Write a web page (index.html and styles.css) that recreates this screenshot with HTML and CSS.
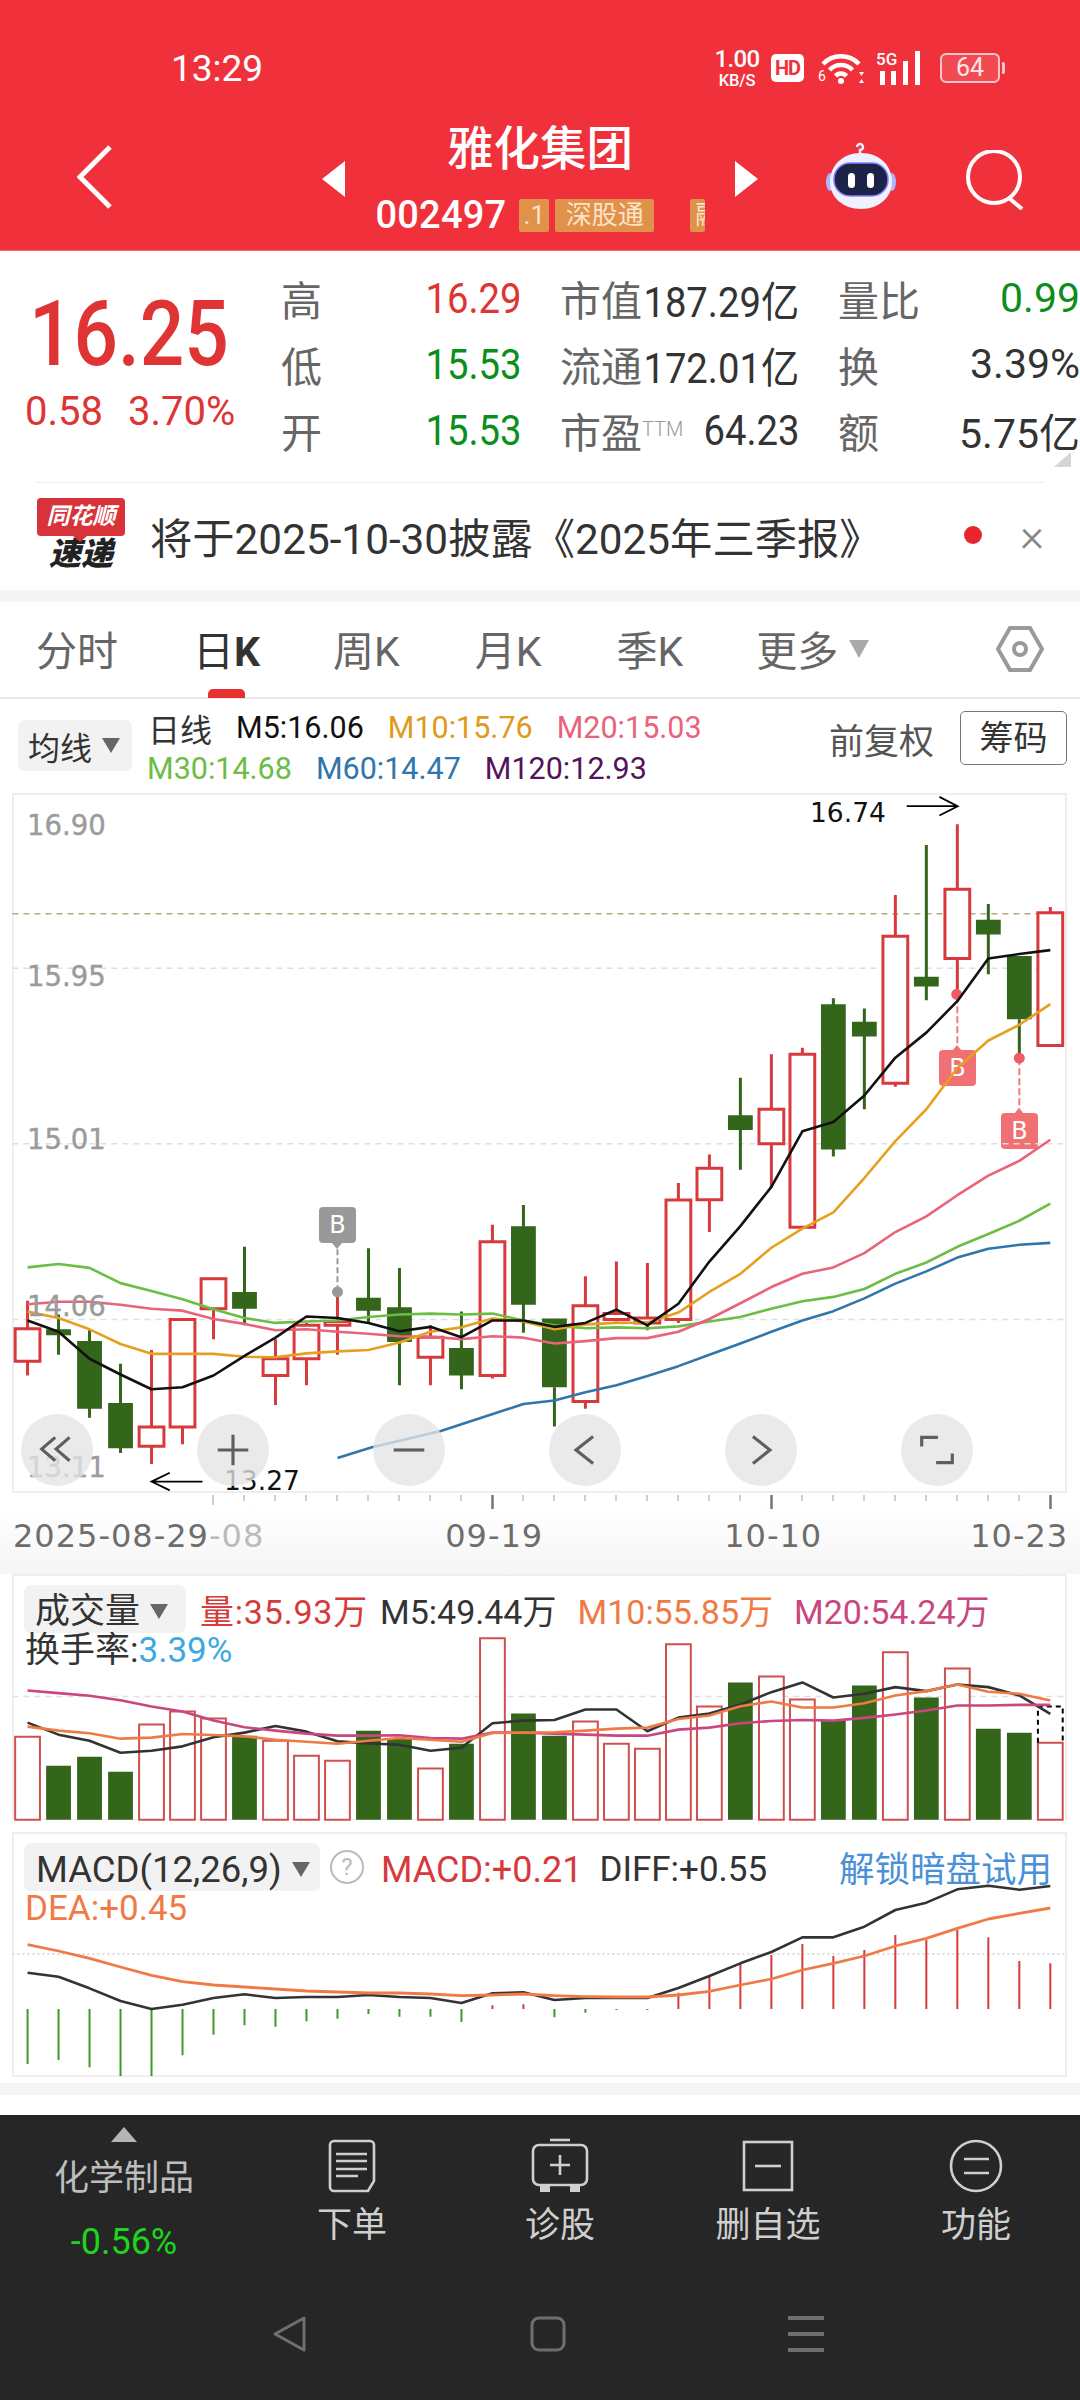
FILE: index.html
```html
<!DOCTYPE html>
<html lang="zh-CN">
<head>
<meta charset="utf-8">
<title>雅化集团</title>
<link rel="stylesheet" href="styles.css">
</head>
<body>
<div class="page">
  <header class="appbar">
    <div class="status">
      <span class="clock">13:29</span>
      <div class="status-icons">
        <div class="speed"><span class="speed-num">1.00</span><span class="speed-unit">KB/S</span></div>
        <span class="hd">HD</span>
        <svg class="ic-wifi" viewBox="0 0 46 32"><path d="M5 12a25 25 0 0 1 36 0M11.500 18a16 16 0 0 1 23 0M17.500 24a7.500 7.500 0 0 1 11 0"/><circle cx="23" cy="29" r="3"/><polygon class="wifi-solid" points="41,20 46,20 43.500,24"/><polygon class="wifi-solid" points="41,31 46,31 43.500,27"/><text x="0" y="29" class="wifi-six">6</text></svg>
        <svg class="ic-signal" viewBox="0 0 48 36"><text x="0" y="15" class="sig-text">5G</text><rect x="4" y="21" width="5" height="14"/><rect x="15" y="21" width="5" height="14"/><rect x="27" y="11" width="5" height="24"/><rect x="39" y="1" width="5" height="34"/></svg>
        <div class="battery"><span class="battery-body">64</span><span class="battery-tip"></span></div>
      </div>
    </div>
    <div class="topnav">
      <div class="nav-back">
        <svg class="ic-back" viewBox="0 0 36 64"><path d="M33 2 3 32l30 30"/></svg>
      </div>
      <div class="nav-stock">
        <span class="tri tri-left"></span>
        <div class="stock-stack">
          <div class="stock-name">雅化集团</div>
          <div class="stock-code"><span class="code">002497</span><span class="tag tag-one">.1</span><span class="tag tag-sgt">深股通</span><span class="tag tag-cut">融</span></div>
        </div>
        <span class="tri tri-right"></span>
      </div>
      <div class="nav-tools">
        <svg class="ic-robot" viewBox="0 0 70 68">
          <path class="rb-ant" d="M34 13V8a3 3 0 1 0-3-3"/>
          <ellipse class="rb-ear" cx="4" cy="40" rx="4" ry="9"/>
          <ellipse class="rb-ear" cx="66" cy="40" rx="4" ry="9"/>
          <path class="rb-head" d="M35 11c19 0 31 13 31 29 0 15-13 27-31 27S4 55 4 40C4 24 16 11 35 11z"/>
          <rect class="rb-face" x="8" y="21" width="54" height="33" rx="16"/>
          <rect class="rb-eye" x="22" y="31" width="7" height="15" rx="3.500"/>
          <rect class="rb-eye" x="41" y="31" width="7" height="15" rx="3.500"/>
        </svg>
        <svg class="ic-search" viewBox="0 0 58 60"><circle cx="28" cy="27" r="26"/><path d="M43 48l13 11"/></svg>
      </div>
    </div>
  </header>

  <section class="quote">
    <div class="price-col">
      <div class="price">16.25</div>
      <div class="change"><span>0.58</span><span>3.70%</span></div>
    </div>
    <div class="stats">
      <div class="stat"><span class="lbl">高</span><span class="val up">16.29</span></div>
      <div class="stat"><span class="lbl">市值</span><span class="val">187.29亿</span></div>
      <div class="stat"><span class="lbl">量比</span><span class="val val-wide down">0.99</span></div>
      <div class="stat"><span class="lbl">低</span><span class="val down">15.53</span></div>
      <div class="stat"><span class="lbl">流通</span><span class="val">172.01亿</span></div>
      <div class="stat"><span class="lbl">换</span><span class="val val-wide">3.39%</span></div>
      <div class="stat"><span class="lbl">开</span><span class="val down">15.53</span></div>
      <div class="stat"><span class="lbl">市盈<sup class="ttm">TTM</sup></span><span class="val">64.23</span></div>
      <div class="stat"><span class="lbl">额</span><span class="val val-wide">5.75亿</span></div>
    </div>
    <span class="corner"></span>
  </section>

  <section class="notice">
    <div class="notice-logo"><span class="logo-top">同花顺</span><span class="logo-bottom">速递</span></div>
    <div class="notice-text">将于2025-10-30披露《2025年三季报》</div>
    <span class="notice-dot"></span>
    <span class="notice-close">×</span>
  </section>
  <div class="band"></div>

  <nav class="tabs">
    <span class="tab">分时</span>
    <span class="tab tab-active">日<b>K</b></span>
    <span class="tab">周K</span>
    <span class="tab">月K</span>
    <span class="tab">季K</span>
    <span class="tab tab-more">更多<i class="caret caret-light"></i></span>
    <svg class="ic-hex" viewBox="0 0 48 48"><path d="M14 3h20l12 21-12 21H14L2 24z"/><circle cx="24" cy="24" r="6"/></svg>
  </nav>

  <div class="legend">
    <div class="chip chip-ma">均线<i class="caret"></i></div>
    <div class="legend-lines">
      <div class="legend-row"><span class="legend-k">日线</span><span class="c-m5">M5:16.06</span><span class="c-m10">M10:15.76</span><span class="c-m20">M20:15.03</span></div>
      <div class="legend-row"><span class="c-m30">M30:14.68</span><span class="c-m60">M60:14.47</span><span class="c-m120">M120:12.93</span></div>
    </div>
    <span class="fq">前复权</span>
    <span class="chouma">筹码</span>
  </div>

  <section class="panel panel-main">
    <span class="badge badge-gray b1">B</span>
    <span class="badge badge-red b2">B</span>
    <span class="badge badge-red b3">B</span>
    <svg class="chart" viewBox="40.66 10.2 3052 1417" preserveAspectRatio="none">
      <path class="grid" d="M36 363H3100M36 720H3100M36 1078H3100"/>
      <path class="grid-last" d="M36 252H3100"/>
      <path class="wick-r" d="M80 1040V1097M80 1163V1192M440 1140V1297M440 1336V1372M530 1297V1332M620 1056V1118M800 1118V1158M800 1192V1252M890 1085V1090M890 1158V1212M980 1022V1082M980 1090V1150M1250 1090V1114M1250 1155V1212M1430 885V920M1430 1192V1198M1700 990V1050M1700 1245V1260M1790 960V1066M1790 1078V1082M1880 963V1075M1880 1085V1100M1970 800V835M1970 1078V1085M2060 742V770M2060 834V900M2240 538V650M2240 720V810M2330 525V538M2330 890V893M2600 214V298M2600 597V604M2780 70V202M2780 343V420M3050 238V250"/>
      <path class="body-r" d="M44 1097h72v66h-72zM404 1297h72v39h-72zM494 1078h72v219h-72zM584 995h72v61h-72zM764 1158h72v34h-72zM854 1090h72v68h-72zM944 1082h72v8h-72zM1214 1114h72v41h-72zM1394 920h72v272h-72zM1664 1050h72v195h-72zM1754 1066h72v12h-72zM1844 1075h72v10h-72zM1934 835h72v243h-72zM2024 770h72v64h-72zM2204 650h72v70h-72zM2294 538h72v352h-72zM2564 298h72v299h-72zM2744 202h72v141h-72zM3014 250h72v270h-72z"/>
      <path class="wick-g" d="M170 1068V1150M260 1100V1278M350 1168V1350M710 930V1090M1070 933V1085M1160 973V1212M1340 1062V1220M1520 845V1105M1610 1216V1296M2150 586V773M2420 424V746M2510 445V650M2690 112V428M2870 232V375M2960 467V545"/>
      <path class="body-g" d="M134 1098h72v12h-72zM224 1122h72v138h-72zM314 1248h72v92h-72zM674 1022h72v34h-72zM1034 1034h72v26h-72zM1124 1053h72v71h-72zM1304 1136h72v56h-72zM1484 888h72v160h-72zM1574 1076h72v140h-72zM2114 662h72v30h-72zM2384 436h72v296h-72zM2474 472h72v30h-72zM2654 380h72v20h-72zM2834 264h72v30h-72zM2924 338h72v129h-72z"/>
      <path class="mark-gray-line" d="M980 935V1020"/>
      <path class="mark-gray-dot" d="M980 1022h.01"/>
      <path class="mark-red-line" d="M2780 420V522M2960 546V650"/>
      <path class="mark-red-dot" d="M2778 416h.01M2960 546h.01"/>
      <polyline class="ln l-m30" points="80,972 170,965 260,973 350,1004 440,1020 530,1037 620,1057 710,1075 800,1085 890,1082 980,1080 1070,1073 1160,1068 1250,1066 1340,1068 1430,1066 1520,1080 1610,1090 1700,1096 1790,1094 1880,1096 1970,1092 2060,1082 2150,1073 2240,1056 2330,1041 2420,1032 2510,1016 2600,985 2690,962 2780,930 2870,904 2960,877 3050,842"/>
      <polyline class="ln l-m60" points="980,1360 1080,1338 1280,1305 1520,1250 1610,1243 1700,1226 1790,1212 1880,1193 1970,1173 2060,1150 2150,1127 2240,1103 2330,1080 2420,1061 2510,1035 2600,1005 2690,980 2780,952 2870,934 2960,926 3050,922"/>
      <polyline class="ln l-m20" points="80,1047 170,1042 260,1042 350,1048 440,1056 530,1060 620,1077 710,1087 800,1100 890,1098 980,1103 1070,1107 1160,1112 1250,1113 1340,1118 1430,1112 1520,1115 1610,1127 1700,1122 1790,1116 1880,1116 1970,1103 2060,1077 2150,1045 2240,1012 2330,985 2420,972 2510,943 2600,900 2690,868 2780,825 2870,785 2960,755 3050,712"/>
      <polyline class="ln l-m10" points="80,1062 170,1075 260,1098 350,1128 440,1148 530,1148 620,1148 710,1154 800,1155 890,1147 980,1143 1070,1140 1160,1125 1250,1103 1340,1094 1430,1076 1520,1082 1610,1098 1700,1088 1790,1085 1880,1084 1970,1064 2060,1022 2150,985 2240,932 2330,893 2420,860 2510,790 2600,715 2690,650 2780,566 2870,510 2960,478 3050,436"/>
      <polyline class="ln l-m5" points="80,1080 170,1103 260,1158 350,1190 440,1220 530,1216 620,1192 710,1152 800,1115 890,1072 980,1075 1070,1085 1160,1102 1250,1093 1340,1114 1430,1080 1520,1080 1610,1093 1700,1085 1790,1058 1880,1090 1970,1046 2060,960 2150,888 2240,808 2330,695 2420,676 2510,622 2600,545 2690,494 2780,430 2870,343 2960,334 3050,326"/>
      <path class="arrow" d="M2633 33H2781M2728 14l53 19-53 19M588 1408H440M493 1390l-53 18 53 18"/>
    </svg>
    <span class="ylab y1">16.90</span>
    <span class="ylab y2">15.95</span>
    <span class="ylab y3">15.01</span>
    <span class="ylab y4">14.06</span>
    <span class="ylab y5">13.11</span>
    <span class="extreme ex-hi">16.74</span>
    <span class="extreme ex-lo">13.27</span>
    <div class="chart-btns">
      <span class="cbtn"><svg viewBox="0 0 40 40"><path d="M18 6 3 19l15 13M34 6 19 19l15 13"/></svg></span>
      <span class="cbtn"><svg viewBox="0 0 40 40"><path d="M3 20h34M20 3v34"/></svg></span>
      <span class="cbtn"><svg viewBox="0 0 40 40"><path d="M3 20h34"/></svg></span>
      <span class="cbtn"><svg viewBox="0 0 40 40"><path d="M29 5 10 20l19 15"/></svg></span>
      <span class="cbtn"><svg viewBox="0 0 40 40"><path d="M11 5l19 15-19 15"/></svg></span>
      <span class="cbtn"><svg viewBox="0 0 40 40"><path d="M21 6H3v10M19 34h18V24"/></svg></span>
    </div>
  </section>

  <div class="axis">
    <svg class="ticks" viewBox="0 0 1080 18">
      <path class="tick" d="M213 2v10M244 2v6M275 2v6M306 2v6M337 2v6M368 2v6M399 2v6M430 2v6M461 2v6M523 2v6M554 2v6M585 2v6M616 2v6M647 2v6M678 2v6M709 2v6M740 2v6M802 2v6M833 2v6M864 2v6M895 2v6M926 2v6M957 2v6M988 2v6M1019 2v6"/>
      <path class="tick-major" d="M492.500 2v14M771.500 2v14M1050.500 2v14"/>
    </svg>
    <div class="dates">
      <span class="date">2025-08-29<span class="date-fade">-08</span></span>
      <span class="date d2">09-19</span>
      <span class="date d3">10-10</span>
      <span class="date d4">10-23</span>
    </div>
  </div>

  <section class="panel panel-vol">
    <svg class="chart" viewBox="40.66 48 3052 726" preserveAspectRatio="none">
      <path class="grid" d="M36 408H3100"/>
      <path class="vol-g" d="M134 615h72V776h-72zM224 588h72V776h-72zM314 633h72V776h-72zM674 525h72V776h-72zM1034 510h72V776h-72zM1124 534h72V776h-72zM1304 549h72V776h-72zM1484 459h72V776h-72zM1574 525h72V776h-72zM2114 366h72V776h-72zM2384 480h72V776h-72zM2474 375h72V776h-72zM2654 411h72V776h-72zM2834 504h72V776h-72zM2924 516h72V776h-72z"/>
      <path class="vol-r" d="M44 528h72V776h-72zM404 492h72V776h-72zM494 453h72V776h-72zM584 474h72V776h-72zM764 540h72V776h-72zM854 585h72V776h-72zM944 600h72V776h-72zM1214 623h72V776h-72zM1394 234h72V776h-72zM1664 483h72V776h-72zM1754 549h72V776h-72zM1844 564h72V776h-72zM1934 252h72V776h-72zM2024 438h72V776h-72zM2204 348h72V776h-72zM2294 417h72V776h-72zM2564 276h72V776h-72zM2744 324h72V776h-72zM3014 546h72V776h-72z"/>
      <path class="vol-live" d="M3014 546V438h72V546"/>
      <polyline class="ln l-v5" points="80,486 170,522 260,540 350,576 440,570 530,557 620,530 710,516 800,496 890,513 980,542 1070,548 1160,552 1250,570 1340,561 1430,488 1520,480 1610,478 1700,447 1790,447 1880,512 1970,471 2060,459 2150,432 2240,395 2330,366 2420,411 2510,400 2600,380 2690,392 2780,372 2870,380 2960,405 3050,460"/>
      <polyline class="ln l-v20" points="80,390 170,398 260,406 350,419 440,438 530,453 620,480 710,500 800,510 890,519 980,525 1070,525 1160,524 1250,532 1340,534 1430,516 1520,516 1610,519 1700,522 1790,525 1880,525 1970,507 2060,501 2150,488 2240,481 2330,478 2420,480 2510,472 2600,462 2690,450 2780,435 2870,435 2960,433 3050,433"/>
      <polyline class="ln l-v10" points="80,498 170,510 260,518 350,534 440,531 530,520 620,523 710,527 800,537 890,543 980,549 1070,540 1160,532 1250,537 1340,543 1430,517 1520,516 1610,515 1700,510 1790,504 1880,501 1970,475 2060,465 2150,437 2240,423 2330,441 2420,441 2510,428 2600,405 2690,392 2780,372 2870,394 2960,400 3050,420"/>
    </svg>
    <div class="panel-head">
      <div class="head-row">
        <div class="chip chip-vol">成交量<i class="caret"></i></div>
        <span class="h-red h-gapless">量:35.93万</span>
        <span class="h-dark">M5:49.44万</span>
        <span class="h-orange">M10:55.85万</span>
        <span class="h-pink">M20:54.24万</span>
      </div>
      <div class="head-sub">换手率:<span class="h-blue">3.39%</span></div>
    </div>
  </section>

  <section class="panel panel-macd">
    <svg class="chart" viewBox="20.33 42 1526 723" preserveAspectRatio="none">
      <path class="grid-dot" d="M18 402H1550"/>
      <path class="macd-g" d="M40 567V732M85 567V720M130 567V742M175 567V768M220 567V768M265 567V706M310 567V644M355 567V616M400 567V620M445 567V604M490 567V596M535 567V582M580 567V590M625 567V590M670 567V606M805 567V592M850 567V578M895 567V570M940 567V570"/>
      <path class="macd-r" d="M715 567V556M760 567V553M985 567V518M1030 567V470M1075 567V432M1120 567V405M1165 567V372M1210 567V408M1255 567V390M1300 567V345M1345 567V360M1390 567V330M1435 567V352M1480 567V423M1525 567V430"/>
      <polyline class="ln l-diff" points="40,458 85,470 130,505 175,543 220,567 265,554 310,534 355,523 400,534 445,531 490,531 535,525 580,531 625,534 670,549 715,520 760,517 805,540 850,534 895,534 940,534 985,504 1030,468 1075,430 1120,396 1165,352 1210,352 1255,320 1300,270 1345,248 1390,208 1435,197 1480,209 1525,198"/>
      <polyline class="ln l-dea" points="40,374 85,393 130,415 175,441 220,466 265,485 310,495 355,501 400,507 445,513 490,516 535,519 580,519 625,522 670,527 715,525 760,522 805,527 850,530 895,531 940,531 985,525 1030,514 1075,495 1120,477 1165,450 1210,430 1255,408 1300,378 1345,355 1390,325 1435,297 1480,280 1525,264"/>
    </svg>
    <div class="panel-head">
      <div class="head-row head-row-macd">
        <div class="chip chip-macd">MACD(12,26,9)<i class="caret"></i></div>
        <span class="help">?</span>
        <span class="h-red macd-val">MACD:+0.21</span>
        <span class="h-dark diff-val">DIFF:+0.55</span>
        <span class="h-link">解锁暗盘试用</span>
      </div>
      <div class="head-sub h-orange">DEA:+0.45</div>
    </div>
  </section>

  <div class="white-gap"></div>
  <div class="band"></div>
  <div class="white-foot"></div>

  <footer class="bottombar">
    <div class="actions">
      <div class="action action-sector">
        <span class="sector-tri"></span>
        <span class="sector-name">化学制品</span>
        <span class="sector-pct">-0.56%</span>
      </div>
      <div class="action">
        <svg class="act-ic" viewBox="0 0 60 56"><path d="M12 3h36a4 4 0 0 1 4 4v36l-6 10H12a4 4 0 0 1-4-4V7a4 4 0 0 1 4-4z"/><path d="M14 16h31M14 23h31M14 31h31M14 38h22"/></svg>
        <span class="act-label">下单</span>
      </div>
      <div class="action">
        <svg class="act-ic" viewBox="0 0 60 56"><path d="M20 2h20"/><path d="M9 7h42a6 6 0 0 1 6 6v28a6 6 0 0 1-6 6H9a6 6 0 0 1-6-6V13a6 6 0 0 1 6-6z"/><path d="M20 27h20M30 17v20"/><path class="act-fill" d="M10 48h10v6H10zM40 48h10v6H40z"/></svg>
        <span class="act-label">诊股</span>
      </div>
      <div class="action">
        <svg class="act-ic" viewBox="0 0 60 56"><rect x="6" y="4" width="48" height="48"/><path d="M17 28h26"/></svg>
        <span class="act-label">删自选</span>
      </div>
      <div class="action">
        <svg class="act-ic" viewBox="0 0 60 56"><circle cx="30" cy="28" r="25"/><path d="M18 21h25M18 35h25"/></svg>
        <span class="act-label">功能</span>
      </div>
    </div>
    <div class="sysnav">
      <svg class="sys-ic" viewBox="0 0 36 36"><path d="M32 2 3 18l29 16z"/></svg>
      <svg class="sys-ic" viewBox="0 0 36 36"><rect x="2" y="2" width="32" height="32" rx="7"/></svg>
      <svg class="sys-ic sys-menu" viewBox="0 0 36 36"><path d="M0 2h36M0 18h36M0 34h36"/></svg>
    </div>
  </footer>
</div>
</body>
</html>
```

FILE: styles.css
```css
* { box-sizing: border-box; }
html, body { margin: 0; padding: 0; background: #fff; }
body { font-family: Roboto, "Noto Sans CJK SC", sans-serif; color: #333; }
.page { width: 1080px; height: 2400px; overflow: hidden; display: flex; flex-direction: column; }

/* app bar */
.appbar { height: 251px; background: #f0313b; color: #fff; flex: none; border-bottom: 1px solid #e96a70; }
.status { height: 110px; padding: 26px 75px 0 171px; display: flex; align-items: center; }
.clock { font-size: 37px; }
.status-icons { margin-left: auto; display: flex; align-items: center; }
.speed { display: flex; flex-direction: column; align-items: center; width: 50px; font-weight: 500; }
.speed-num { font-size: 24px; line-height: 24px; letter-spacing: -.6px; }
.speed-unit { font-size: 16.500px; line-height: 19px; letter-spacing: -.2px; }
.hd { width: 33px; height: 28px; margin-left: 9px; border-radius: 5px; background: #fff; color: #f0313b; font-size: 20px; line-height: 28px; font-weight: 700; text-align: center; letter-spacing: -1px; }
.ic-wifi { width: 46px; height: 32px; margin-left: 14px; overflow: visible; }
.ic-wifi path { fill: none; stroke: #fff; stroke-width: 4.500; }
.ic-wifi circle, .wifi-solid { fill: #fff; }
.wifi-six { font-size: 14px; fill: #fff; }
.ic-signal { width: 48px; height: 36px; margin-left: 12px; fill: #fff; }
.sig-text { font-size: 17px; font-weight: 500; fill: #fff; }
.battery { display: flex; align-items: center; margin-left: 16px; }
.battery-body { width: 60px; height: 30px; border: 2px solid #fbc5c8; border-radius: 6px; background: rgba(255,255,255,.12); text-align: center; font-size: 25px; line-height: 26px; color: #fde6e7; }
.battery-tip { width: 3px; height: 12px; margin-left: 2px; background: #fbc5c8; border-radius: 0 2px 2px 0; }

.topnav { height: 140px; display: grid; grid-template-columns: 322px 436px 1fr; align-items: start; }
.nav-back { padding: 35px 0 0 77px; }
.ic-back { display: block; width: 36px; height: 64px; fill: none; stroke: #fff; stroke-width: 5; }
.nav-stock { display: flex; justify-content: space-between; align-items: flex-start; }
.tri { width: 0; height: 0; margin-top: 51px; border-top: 18px solid transparent; border-bottom: 18px solid transparent; }
.tri-left { border-right: 23px solid #fff; }
.tri-right { border-left: 23px solid #fff; }
.stock-stack { width: 329px; display: flex; flex-direction: column; align-items: center; }
.stock-name { margin-top: 11px; font-size: 46.500px; line-height: 56px; font-weight: 500; }
.stock-code { margin-top: 16px; width: 329px; height: 44px; overflow: hidden; display: flex; align-items: center; }
.code { font-size: 38px; letter-spacing: .2px; font-weight: 500; }
.tag { flex: none; height: 33px; background: #e0914a; border-radius: 2px; color: #fde3c8; font-size: 26px; line-height: 33px; text-align: center; white-space: nowrap; }
.tag-one { width: 30px; margin-left: 13px; }
.tag-sgt { width: 99px; margin-left: 6px; }
.tag-cut { width: 15px; margin-left: 36px; overflow: hidden; text-align: left; text-indent: 5px; }
.nav-tools { padding: 32px 0 0 68px; display: flex; align-items: flex-start; }
.ic-robot { width: 70px; height: 68px; flex: none; }
.rb-ant { fill: none; stroke: #eef; stroke-width: 2.500; }
.rb-ear { fill: #a9b8ff; }
.rb-head { fill: #eef2ff; }
.rb-face { fill: #1b2347; stroke: #8a7dff; stroke-width: 1.500; }
.rb-eye { fill: #fff; }
.ic-search { width: 58px; height: 60px; margin: 8px 0 0 70px; fill: none; stroke: #fff; stroke-width: 4; }

/* quote */
.quote { height: 231px; flex: none; display: flex; position: relative; }
.price-col { width: 281px; flex: none; padding: 39px 0 0 25px; }
.price { font-size: 90px; line-height: 90px; color: #df3434; font-weight: 500; transform: scaleX(.87); transform-origin: left; margin-left: 4px; }
.change { margin-top: 10px; display: flex; gap: 25px; font-size: 40px; line-height: 44px; color: #df3434; }
.stats { flex: 1; padding-top: 14px; display: grid; grid-template-columns: 240px 239px 242px; column-gap: 39px; grid-auto-rows: 66px; }
.stat { display: flex; justify-content: space-between; align-items: center; white-space: nowrap; }
.lbl { font-size: 41px; color: #666; }
.ttm { font-size: 20px; color: #999; vertical-align: 12px; line-height: 0; font-weight: 300; }
.val { font-size: 42px; color: #333; margin-left: -30px; transform: scaleX(.91); transform-origin: right center; }
.val-wide { font-size: 41px; transform: none; }
.val.up { color: #df3434; }
.val.down { color: #0a8f1a; }
.corner { position: absolute; right: 9px; bottom: 15px; width: 0; height: 0; border-left: 17px solid transparent; border-bottom: 15px solid #d6d6d6; }

/* notice */
.notice { height: 108px; flex: none; margin: 0 36px; padding-bottom: 3px; border-top: 1px solid #eeeeee; display: flex; align-items: center; }
.notice-logo { width: 90px; flex: none; display: flex; flex-direction: column; align-items: center; }
.logo-top { width: 88px; height: 38px; background: #d8323a; border-radius: 4px; color: #fff; font-size: 23px; line-height: 38px; text-align: center; font-weight: 700; font-style: italic; white-space: nowrap; position: relative; }
.logo-top::after { content: ""; position: absolute; left: 36px; top: 38px; width: 0; height: 0; border-left: 7px solid transparent; border-right: 7px solid transparent; border-top: 6px solid #d8323a; }
.logo-bottom { font-size: 32px; line-height: 36px; font-weight: 900; font-style: italic; color: #222; }
.notice-text { margin-left: 24px; font-size: 42.300px; color: #333; white-space: nowrap; }
.notice-dot { margin-left: auto; width: 18px; height: 18px; border-radius: 50%; background: #e8242c; }
.notice-close { margin-left: 38px; width: 24px; font-size: 46px; line-height: 46px; color: #888; text-align: right; font-weight: 300; }
.band { height: 12px; flex: none; background: #f5f5f5; }

/* tabs */
.tabs { height: 97px; flex: none; padding: 5px 38px 0 36px; display: flex; align-items: center; gap: 75px; border-bottom: 2px solid #e8e8e8; font-size: 41px; color: #666; position: relative; }
.tab { white-space: nowrap; line-height: 50px; }
.tab-active { color: #333; margin: 0 -2px 0 0; position: relative; }
.tab-active b { font-weight: 700; }
.tab-active::after { content: ""; position: absolute; left: 15px; right: 15px; top: 62px; height: 9px; background: #e7302f; border-radius: 5px 5px 0 0; }
.tab-more { display: flex; align-items: center; margin-left: -2px; }
.caret { display: inline-block; width: 0; height: 0; margin-left: 9px; border-left: 9px solid transparent; border-right: 9px solid transparent; border-top: 15px solid #666; }
.caret-light { border-top-color: #aaa; border-left-width: 10px; border-right-width: 10px; border-top-width: 18px; margin-left: 11px; margin-top: -6px; }
.ic-hex { width: 48px; height: 48px; margin-left: auto; fill: none; stroke: #9a9a9a; stroke-width: 4; position: relative; left: 2px; top: -3px; }

/* legend */
.legend { height: 94px; flex: none; display: flex; align-items: flex-start; padding: 8px 13px 0 18px; font-size: 30.500px; position: relative; }
.chip { background: #f2f2f2; border-radius: 7px; display: flex; align-items: center; color: #333; white-space: nowrap; }
.chip-ma { width: 114px; height: 51px; margin-top: 13px; padding-left: 10px; font-size: 32px; flex: none; }
.legend-lines { margin-left: 15px; flex: none; }
.legend-row { display: flex; gap: 24px; height: 41px; align-items: center; white-space: nowrap; }
.legend-k { font-size: 32px; color: #333; margin: 0 0 0 1px; }
.c-m5 { color: #111; }
.c-m10 { color: #e09a1a; }
.c-m20 { color: #e9637a; }
.c-m30 { color: #6cbd45; }
.c-m60 { color: #2f76ad; }
.c-m120 { color: #54145a; }
.fq { margin-left: auto; margin-top: 14px; font-size: 35px; line-height: 44px; color: #555; }
.chouma { margin: 4px 0 0 26px; width: 107px; height: 54px; border: 1px solid #777; border-radius: 5px; font-size: 34px; line-height: 52px; text-align: center; color: #333; }

/* panels */
.panel { position: relative; flex: none; margin: 0 13px 0 12px; border: 2px solid #eeeeee; background: #fff; }
.panel-main { height: 700px; }
.panel-vol { height: 246px; border-bottom-width: 1px; }
.panel-macd { height: 245px; margin-top: 12px; }
.chart { position: absolute; left: 0; top: 0; width: 100%; height: 100%; overflow: visible; fill: none; }
.chart * { vector-effect: non-scaling-stroke; }
.grid { stroke: #dfdfdf; stroke-width: 1.500; stroke-dasharray: 6 5; }
.grid-last { stroke: #b9a77f; stroke-width: 1.500; stroke-dasharray: 6 5; }
.grid-dot { stroke: #dcdcdc; stroke-width: 2; stroke-dasharray: 2 3; }
.wick-r { stroke: #d63a3c; stroke-width: 3; }
.body-r { stroke: #d63a3c; stroke-width: 3; fill: #fff; }
.wick-g { stroke: #33651a; stroke-width: 3; }
.body-g { fill: #33651a; }
.ln { fill: none; stroke-width: 2.600; stroke-linejoin: round; }
.l-m5 { stroke: #111; }
.l-m10 { stroke: #e5a021; }
.l-m20 { stroke: #e9637a; }
.l-m30 { stroke: #6cbd45; }
.l-m60 { stroke: #2f76ad; }
.arrow { stroke: #000; stroke-width: 1.800; fill: none; }
.mark-gray-line { stroke: #999; stroke-width: 2; stroke-dasharray: 6 3; }
.mark-gray-dot { stroke: #999; stroke-width: 11; stroke-linecap: round; }
.mark-red-line { stroke: #f07a80; stroke-width: 2; stroke-dasharray: 7 3; }
.mark-red-dot { stroke: #ee5d63; stroke-width: 11; stroke-linecap: round; }

.badge { position: absolute; width: 37px; height: 36px; border-radius: 4px; color: #fff; font-family: "DejaVu Sans", sans-serif; font-size: 24px; line-height: 36px; text-align: center; }
.badge::after { content: ""; position: absolute; left: 13px; width: 0; height: 0; border-left: 5px solid transparent; border-right: 5px solid transparent; }
.badge-gray { background: #999; }
.badge-gray::after { top: 36px; border-top: 6px solid #999; }
.badge-red { background: #f07074; }
.badge-red::after { top: -5px; border-bottom: 6px solid #f07074; }
.b1 { left: 305px; top: 412px; }
.b2 { left: 925px; top: 255px; }
.b3 { left: 987px; top: 318px; }

.ylab { position: absolute; left: 13px; font-family: "DejaVu Sans", sans-serif; font-size: 27.500px; line-height: 32px; color: #9b9b9b; -webkit-text-stroke: .4px #9b9b9b; }
.y1 { top: 14px; }
.y2 { top: 165px; }
.y3 { top: 328px; }
.y4 { top: 495px; }
.y5 { top: 656px; }
.extreme { position: absolute; font-family: "DejaVu Sans", sans-serif; font-size: 26.500px; line-height: 30px; color: #111; }
.ex-hi { left: 796px; top: 3px; }
.ex-lo { left: 210px; top: 671px; }
.chart-btns { position: absolute; left: 7px; top: 619px; display: flex; gap: 104px; }
.cbtn { width: 72px; height: 72px; border-radius: 50%; background: rgba(228,228,228,.78); display: flex; align-items: center; justify-content: center; }
.cbtn svg { width: 36px; height: 36px; fill: none; stroke: #5f5f5f; stroke-width: 3.500; }

/* axis */
.axis { height: 81px; flex: none; background: linear-gradient(#fff 15%, #f5f5f5 100%); position: relative; }
.ticks { display: block; width: 1080px; height: 18px; }
.tick { stroke: #cfcfcf; stroke-width: 2; fill: none; }
.tick-major { stroke: #777; stroke-width: 2.500; fill: none; }
.dates { display: flex; padding-left: 13px; margin-top: 6px; font-family: "DejaVu Sans", sans-serif; font-size: 32px; line-height: 38px; color: #6d6d6d; white-space: nowrap; letter-spacing: 1px; }
.date-fade { color: #bbb; }
.d2 { margin-left: 181px; }
.d3 { margin-left: 181px; }
.d4 { margin-left: 148px; }

/* panel heads */
.panel-head { position: absolute; left: 10px; right: 13px; top: 9px; font-size: 34px; line-height: 40px; }
.head-row { display: flex; align-items: center; white-space: nowrap; gap: 21px; height: 48px; }
.head-row > span { padding-top: 5px; }
.chip-vol { width: 162px; height: 48px; padding: 5px 0 0 11px; font-size: 35px; margin-right: -7px; }
.h-gapless { letter-spacing: .8px; margin-right: -9px; }
.chip-macd { width: 296px; height: 48px; padding: 5px 0 0 12px; font-size: 36.500px; flex: none; }
.chip .caret { margin-left: 10px; }
.head-sub { margin-left: 1px; font-size: 35px; line-height: 36px; color: #333; }
.h-red { color: #d63a3c; }
.h-dark { color: #333; }
.head-sub.h-orange, .h-orange { color: #ef7a45; }
.h-pink { color: #c9467f; }
.h-blue { color: #3ea8e0; }
.h-link { color: #4a90d9; font-size: 35.500px; margin-left: auto; }
.head-row-macd { gap: 0; }
.head-row > .help { width: 34px; height: 34px; padding: 0; margin-left: 10px; border: 2px solid #bbb; border-radius: 50%; color: #bbb; font-size: 24px; line-height: 30px; text-align: center; flex: none; }
.macd-val { font-size: 36px; margin-left: 17px; }
.diff-val { font-size: 35px; margin-left: 17px; }
.vol-g { fill: #33651a; }
.vol-r { stroke: #cf5050; stroke-width: 2; fill: #fff; }
.vol-live { stroke: #000; stroke-width: 2; stroke-dasharray: 5 4; fill: none; }
.l-v5 { stroke: #333; }
.l-v10 { stroke: #ef7a45; }
.l-v20 { stroke: #c9467f; }
.macd-g { stroke: #3d9a2a; stroke-width: 2; }
.macd-r { stroke: #d63a3c; stroke-width: 2; }
.l-diff { stroke: #333; }
.l-dea { stroke: #ef7a45; stroke-width: 2.800; }

.white-gap { height: 6px; flex: none; }
.white-foot { height: 20px; flex: none; }

/* bottom bar */
.bottombar { flex: 1; background: #262626; color: #cfcfcf; }
.actions { height: 175px; display: grid; grid-template-columns: 248px repeat(4, 208px); }
.action { display: flex; flex-direction: column; align-items: center; padding-top: 23px; }
.action-sector { padding-top: 12px; }
.sector-tri { width: 0; height: 0; border-left: 13px solid transparent; border-right: 13px solid transparent; border-bottom: 15px solid #b5b5b5; }
.sector-name { margin-top: 15px; font-size: 35px; line-height: 44px; color: #bdbdbd; }
.sector-pct { margin-top: 21px; font-size: 36px; line-height: 40px; color: #1fd41f; }
.act-ic { width: 60px; height: 56px; fill: none; stroke: #cfcfcf; stroke-width: 2.600; }
.act-fill { fill: #cfcfcf; stroke: none; }
.act-label { margin-top: 12px; font-size: 35px; line-height: 40px; color: #cfcfcf; }
.sysnav { padding: 26px 0 0 272px; display: flex; gap: 222px; }
.sys-ic { width: 36px; height: 36px; fill: none; stroke: #6f6f6f; stroke-width: 3; stroke-linejoin: round; flex: none; }
.sys-menu { stroke-width: 4; }
```
